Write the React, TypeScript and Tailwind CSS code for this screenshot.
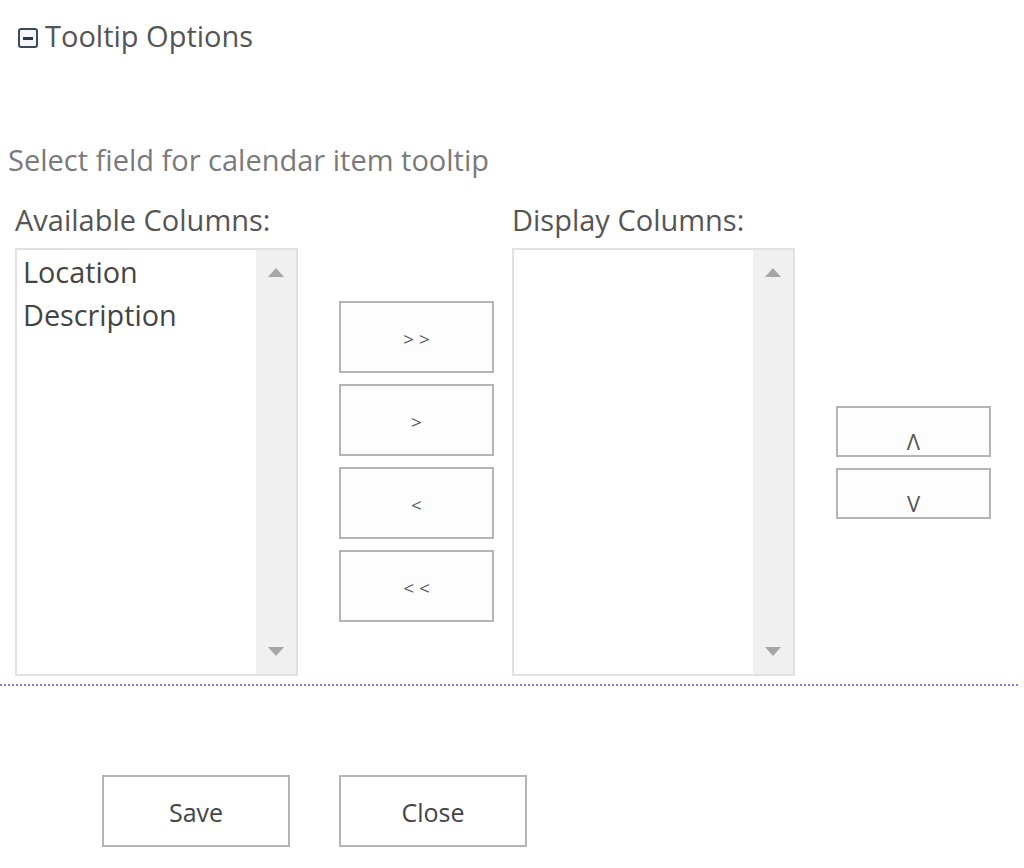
import React from "react";

function Scrollbar() {
  return (
    <div className="w-[40px] h-full bg-[#f0f0f0] flex flex-col items-center justify-between py-[18px]">
      <svg width="16" height="9" viewBox="0 0 16 9"><polygon points="8,0 16,9 0,9" fill="#a6a6a6" /></svg>
      <svg width="16" height="9" viewBox="0 0 16 9"><polygon points="0,0 16,0 8,9" fill="#a6a6a6" /></svg>
    </div>
  );
}

function ListBox({ items }: { items: string[] }) {
  return (
    <div className="w-[283px] h-[428px] border-2 border-[#e1e1e1] bg-white flex">
      <div className="flex-1 pl-[6px] pt-0 text-[28.8px] leading-[43px] text-[#444]">
        {items.map((i) => (
          <div key={i}>{i}</div>
        ))}
      </div>
      <Scrollbar />
    </div>
  );
}

function MoveBtn({ label, h = "h-[72px]", cls = "" }: { label: string; h?: string; cls?: string }) {
  return (
    <div className={`w-[155px] ${h} border-2 border-[#b4b4b4] bg-[#fdfdfd] flex justify-center text-[#555] ${cls}`}>
      {label}
    </div>
  );
}

export default function App() {
  return (
    <div
      className="w-[1024px] h-[868px] bg-white relative overflow-hidden"
      style={{ fontFamily: '"Open Sans", "Noto Sans", sans-serif' }}
    >
      <div className="flex items-center pt-[18px] pl-[18px] h-[54px]">
        <svg width="20" height="20" viewBox="0 0 20 20" className="mt-[3px]">
          <rect x="1" y="1" width="18" height="18" rx="2" fill="#f4f6f8" stroke="#3b4a5c" strokeWidth="2" />
          <rect x="5" y="9" width="10" height="3" fill="#26364a" />
        </svg>
        <span className="ml-[7px] text-[29px] leading-[36px] text-[#555]">Tooltip Options</span>
      </div>

      <div className="mt-[88px] pl-[8px] text-[29px] leading-[36px] text-[#7a7a7a]">
        Select field for calendar item tooltip
      </div>

      <div className="flex mt-[24px]">
        <div className="ml-[15px] flex flex-col">
          <div className="text-[29px] leading-[36px] text-[#555] h-[46px] whitespace-nowrap">Available Columns:</div>
          <ListBox items={["Location", "Description"]} />
        </div>

        <div className="ml-[41px] mt-[99px] flex flex-col gap-[11px] text-[19px]">
          <MoveBtn label="> >" cls="items-center pt-[5px]" />
          <MoveBtn label=">" cls="items-center pt-[5px]" />
          <MoveBtn label="<" cls="items-center pt-[5px]" />
          <MoveBtn label="< <" cls="items-center pt-[5px]" />
        </div>

        <div className="ml-[18px] flex flex-col">
          <div className="text-[29px] leading-[36px] text-[#555] h-[46px] whitespace-nowrap">Display Columns:</div>
          <ListBox items={[]} />
        </div>

        <div className="ml-[41px] mt-[204px] flex flex-col gap-[11px] text-[22px]">
          <MoveBtn label="Λ" h="h-[51px]" cls="items-end leading-[28px] pb-0" />
          <MoveBtn label="V" h="h-[51px]" cls="items-end leading-[28px] pb-0" />
        </div>
      </div>

      <div className="mt-[8px] mr-[6px] border-t-2 border-dotted border-[#7d86c4]" />

      <div className="flex mt-[89px] ml-[102px] gap-[49px]">
        <div className="w-[188px] h-[72px] border-2 border-[#b4b4b4] flex items-center justify-center pt-[3px] text-[25px] text-[#444]">Save</div>
        <div className="w-[188px] h-[72px] border-2 border-[#b4b4b4] flex items-center justify-center pt-[3px] text-[25px] text-[#444]">Close</div>
      </div>
    </div>
  );
}
